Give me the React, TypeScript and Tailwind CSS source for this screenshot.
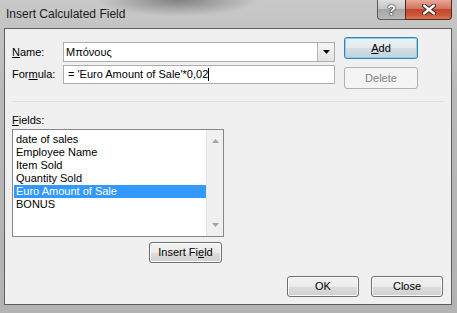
import type { ReactNode } from 'react'

function Btn({
  children,
  className = '',
  variant = 'normal',
}: {
  children: ReactNode
  className?: string
  variant?: 'normal' | 'default' | 'disabled'
}) {
  const look =
    variant === 'disabled'
      ? 'border-[#adb2b5] bg-[#f4f4f4] text-[#838383]'
      : variant === 'default'
        ? 'border-[#3c7fb1] bg-[linear-gradient(#ecf1f4_0%,#e4eaee_50%,#d2dde4_51%,#c6d3dc_100%)] shadow-[inset_0_0_0_1px_#7fd6f7] text-black'
        : 'border-[#707070] bg-[linear-gradient(#f2f2f2_0%,#ebebeb_50%,#dddddd_51%,#cfcfcf_100%)] shadow-[inset_0_0_0_1px_#fbfbfb] text-black'
  return (
    <div
      className={`flex items-center justify-center rounded-[3px] border text-[11px] leading-[13px] ${look} ${className}`}
    >
      {children}
    </div>
  )
}

const fields = ['date of sales', 'Employee Name', 'Item Sold', 'Quantity Sold', 'Euro Amount of Sale', 'BONUS']

export default function App() {
  return (
    <div className="w-[457px] h-[313px] flex flex-col font-['Liberation_Sans',Arial,sans-serif] text-black bg-[radial-gradient(ellipse_80px_16px_at_39%_0%,rgba(70,70,70,0.55),transparent),linear-gradient(#c8c8c8,#b9b9b9_30%,#b3b3b3)] overflow-hidden">
      {/* title bar */}
      <div className="h-[28px] flex items-start shrink-0">
        <div className="pl-[6px] pt-[7px] text-[12px] leading-[15px] text-[#1b1b1b]">Insert Calculated Field</div>
        <div className="ml-auto mr-[5px] flex">
          <div className="w-[28px] h-[20px] flex items-center justify-center rounded-bl-[4px] border border-t-0 border-r-0 border-[#595959] bg-[linear-gradient(#dedede_0%,#c6c6c6_45%,#a6a6a6_50%,#b9b9b9_100%)] text-white text-[14px] font-bold leading-none [text-shadow:0_0_1px_#222,0_0_1px_#222,0_0_2px_#444]">
            ?
          </div>
          <div className="w-[47px] h-[20px] flex items-center justify-center rounded-br-[4px] border border-t-0 border-[#5a2416] bg-[linear-gradient(#e9a898_0%,#d4735f_45%,#c0472e_50%,#c9583a_80%,#db7a55_100%)]">
            <svg width="14" height="11" viewBox="0 0 14 11">
              <path d="M2 1.5 L12 9.5 M12 1.5 L2 9.5" stroke="#3a1a12" strokeWidth="4.2" strokeLinecap="round" />
              <path d="M2 1.5 L12 9.5 M12 1.5 L2 9.5" stroke="#ffffff" strokeWidth="2.4" strokeLinecap="round" />
            </svg>
          </div>
        </div>
      </div>

      {/* client area */}
      <div className="ml-[4px] mr-[5px] h-[277px] border border-[#5e5e5e] bg-[#f0f0f0] flex flex-col shrink-0">
        <div className="flex items-start pl-[7px]">
          <div className="mt-[13px] flex flex-col gap-[3px]">
            <div className="flex items-center">
              <div className="w-[51px] text-[11px] leading-[13px]">
                <span className="underline">N</span>ame:
              </div>
              <div className="w-[272px] h-[20px] border border-[#abadb3] bg-white flex items-center">
                <div className="flex-1 pl-[2px] text-[11px] leading-[13px]">Μπόνους</div>
                <div className="w-[17px] h-full border-l border-[#b3b3b3] bg-[linear-gradient(#f6f6f6,#e2e2e2)] flex items-center justify-center">
                  <svg width="7" height="4" viewBox="0 0 7 4">
                    <path d="M0 0 H7 L3.5 4 Z" fill="#000" />
                  </svg>
                </div>
              </div>
            </div>
            <div className="flex items-center">
              <div className="w-[51px] text-[11px] leading-[13px]">
                For<span className="underline">m</span>ula:
              </div>
              <div className="w-[272px] h-[19px] border border-[#abadb3] bg-white flex items-center pl-[4px]">
                <span className="text-[11px] leading-[13px]">= 'Euro Amount of Sale'*0,02</span>
                <span className="w-px h-[13px] bg-black" />
              </div>
            </div>
          </div>
          <div className="ml-[9px] mt-[8px] flex flex-col gap-[8px]">
            <Btn variant="default" className="w-[74px] h-[22px]">
              <span>
                <span className="underline">A</span>dd
              </span>
            </Btn>
            <Btn variant="disabled" className="w-[74px] h-[22px]">
              Delete
            </Btn>
          </div>
        </div>

        <div className="mt-[12px] ml-[7px] w-[432px] h-px bg-[#d5dfe5]" />

        <div className="mt-[12px] ml-[7px] text-[11px] leading-[13px]">
          <span className="underline">F</span>ields:
        </div>

        <div className="ml-[7px] mt-[2px] w-[212px] h-[108px] border border-[#828790] bg-white flex">
          <div className="flex-1 pt-[3px] pl-px">
            {fields.map((f, i) => (
              <div
                key={f}
                className={`h-[13px] pl-[2px] text-[11px] leading-[13px] ${i === 4 ? 'bg-[#3399ff] text-white' : ''}`}
              >
                {f}
              </div>
            ))}
          </div>
          <div className="w-[17px] bg-[#f0f0f0] border-l border-[#e6e6e6] flex flex-col items-center justify-between py-[9px]">
            <svg width="7" height="4" viewBox="0 0 7 4">
              <path d="M0 4 H7 L3.5 0 Z" fill="#a3a3a3" />
            </svg>
            <svg width="7" height="4" viewBox="0 0 7 4">
              <path d="M0 0 H7 L3.5 4 Z" fill="#a3a3a3" />
            </svg>
          </div>
        </div>

        <div className="mt-[5px] ml-[144px]">
          <Btn className="w-[73px] h-[21px]">
            <span>
              Insert Fi<span className="underline">e</span>ld
            </span>
          </Btn>
        </div>

        <div className="mt-[13px] flex justify-end gap-[12px] pr-[8px]">
          <Btn className="w-[72px] h-[21px]">OK</Btn>
          <Btn className="w-[72px] h-[21px]">Close</Btn>
        </div>
      </div>
    </div>
  )
}
